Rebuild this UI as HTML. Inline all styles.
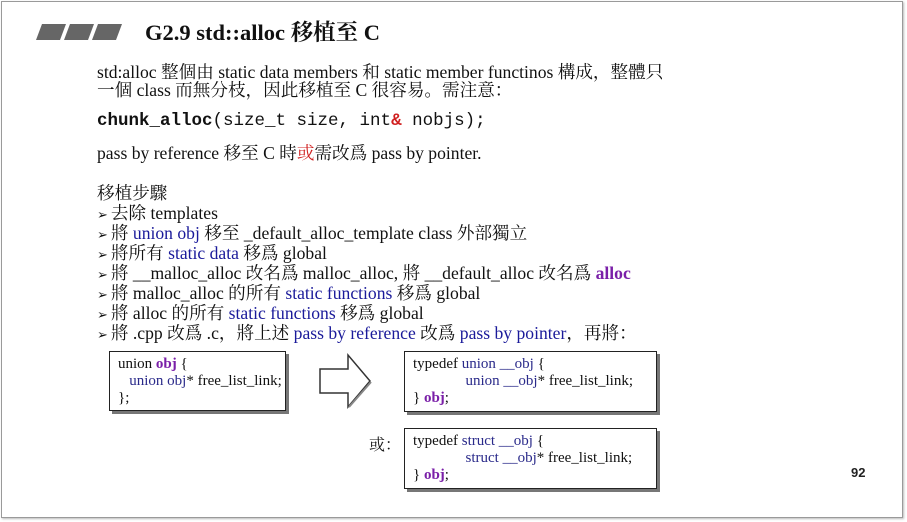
<!DOCTYPE html>
<html><head><meta charset="utf-8"><style>
*{margin:0;padding:0;box-sizing:border-box}
body{width:907px;height:522px;background:#fff;position:relative;overflow:hidden;font-family:"Liberation Serif","Noto Serif CJK SC",serif;color:#111}
.frame{position:absolute;left:1px;top:1px;width:902px;height:517px;border:1px solid #9a9a9a;box-shadow:1px 1px 2px #bbb}
.t{position:absolute;white-space:nowrap;font-size:17.6px;line-height:20px}
.b{color:#1a1a9a}.p{color:#7a1fa8;font-weight:bold}.r{color:#d02020}
.mono{font-family:"Liberation Mono",monospace;font-size:17.5px}
.box{position:absolute;border:1.5px solid #222;box-shadow:3px 3px 0 #777;background:#fff;font-size:15px;line-height:17px;padding:4px 8px;white-space:nowrap}
.blu{color:#2a2a8a}
.ar{font-size:13px;margin-right:3px}
</style></head><body>
<div class="frame"></div>
<svg style="position:absolute;left:36px;top:24px" width="90" height="18"><g fill="#666"><polygon points="6,0 30,0 24,16 0,16"/><polygon points="34,0 58,0 52,16 28,16"/><polygon points="62,0 86,0 80,16 56,16"/></g></svg>
<div class="t" style="left:145px;top:20px;font-size:22.5px;line-height:26px;font-weight:bold">G2.9 std::alloc 移植至 C</div>
<div class="t" style="left:97px;top:62px">std:alloc 整個由 static data members 和 static member functinos 構成，整體只</div>
<div class="t" style="left:97px;top:80px">一個 class 而無分枝，因此移植至 C 很容易。需注意：</div>
<div class="t mono" style="left:97px;top:111px"><b>chunk_alloc</b>(size_t size, int<b class="r">&amp;</b> nobjs);</div>
<div class="t" style="left:97px;top:143px">pass by reference 移至 C 時<span class="r">或</span>需改爲 pass by pointer.</div>
<div class="t" style="left:97px;top:183px">移植步驟</div>
<div class="t" style="left:97px;top:203px"><span class="ar">➢</span>去除 templates</div>
<div class="t" style="left:97px;top:223px"><span class="ar">➢</span>將 <span class="b">union obj</span> 移至 _default_alloc_template class 外部獨立</div>
<div class="t" style="left:97px;top:243px"><span class="ar">➢</span>將所有 <span class="b">static data</span> 移爲 global</div>
<div class="t" style="left:97px;top:263px"><span class="ar">➢</span>將 __malloc_alloc 改名爲 malloc_alloc, 將 __default_alloc 改名爲 <span class="p">alloc</span></div>
<div class="t" style="left:97px;top:283px"><span class="ar">➢</span>將 malloc_alloc 的所有 <span class="b">static functions</span> 移爲 global</div>
<div class="t" style="left:97px;top:303px"><span class="ar">➢</span>將 alloc 的所有 <span class="b">static functions</span> 移爲 global</div>
<div class="t" style="left:97px;top:323px"><span class="ar">➢</span>將 .cpp 改爲 .c，將上述 <span class="b">pass by reference</span> 改爲 <span class="b">pass by pointer</span>，再將：</div>
<div class="box" style="left:109px;top:351px;width:177px;height:60px">union <span class="p">obj</span> {<br>&nbsp;&nbsp;&nbsp;<span class="blu">union obj</span>* free_list_link;<br>};</div>
<svg style="position:absolute;left:318px;top:352px" width="56" height="58"><polygon points="2,17 30,17 30,3 52,29 30,55 30,41 2,41" fill="#fff" stroke="#333" stroke-width="1.5"/><polyline points="31,55 53,30" stroke="#888" stroke-width="2" fill="none"/></svg>
<div class="box" style="left:404px;top:351px;width:253px;height:61px">typedef <span class="blu">union __obj</span> {<br>&nbsp;&nbsp;&nbsp;&nbsp;&nbsp;&nbsp;&nbsp;&nbsp;&nbsp;&nbsp;&nbsp;&nbsp;&nbsp;&nbsp;<span class="blu">union __obj</span>* free_list_link;<br>} <span class="p">obj</span>;</div>
<div class="t" style="left:369px;top:436px;font-size:16px">或：</div>
<div class="box" style="left:404px;top:428px;width:253px;height:61px">typedef <span class="blu">struct __obj</span> {<br>&nbsp;&nbsp;&nbsp;&nbsp;&nbsp;&nbsp;&nbsp;&nbsp;&nbsp;&nbsp;&nbsp;&nbsp;&nbsp;&nbsp;<span class="blu">struct __obj</span>* free_list_link;<br>} <span class="p">obj</span>;</div>
<div class="t" style="left:851px;top:463px;font-family:'Liberation Sans',sans-serif;font-size:13px;font-weight:bold;color:#222">92</div>
</body></html>
